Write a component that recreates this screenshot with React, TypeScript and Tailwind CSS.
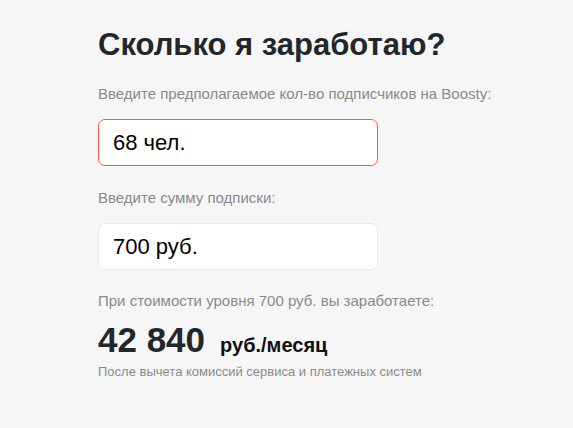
export default function App() {
  return (
    <div
      className="w-full min-h-screen bg-[#f6f6f6] text-[#22272b]"
      style={{ fontFamily: '"Liberation Sans", Arial, sans-serif' }}
    >
      <div className="pl-[98px] pt-[26px] flex flex-col items-start">
        <h1 className="text-[31px] leading-[38px] font-bold">Сколько я заработаю?</h1>
        <p className="mt-[20px] text-[15px] leading-[20px] text-[#8a8a8a]">
          Введите предполагаемое кол-во подписчиков на Boosty:
        </p>
        <div className="mt-[15px] w-[280px] h-[47px] rounded-[7px] border border-[#f0622f] bg-white flex items-center px-[14px]">
          <span className="text-[22px] text-black">68 чел.</span>
        </div>
        <p className="mt-[22px] text-[15px] leading-[20px] text-[#8a8a8a]">Введите сумму подписки:</p>
        <div className="mt-[15px] w-[280px] h-[47px] rounded-[7px] border border-[#e8e8e8] bg-white flex items-center px-[14px]">
          <span className="text-[22px] text-black">700 руб.</span>
        </div>
        <p className="mt-[21px] text-[15px] leading-[20px] text-[#8a8a8a]">
          При стоимости уровня 700 руб. вы заработаете:
        </p>
        <div className="mt-[7px] flex items-baseline">
          <span className="text-[35px] leading-[44px] font-bold">42 840</span>
          <span className="ml-[15px] text-[20px] font-bold text-[#111]">руб./месяц</span>
        </div>
        <p className="mt-[2px] text-[13px] leading-[16px] text-[#8a8a8a]">
          После вычета комиссий сервиса и платежных систем
        </p>
      </div>
    </div>
  );
}
